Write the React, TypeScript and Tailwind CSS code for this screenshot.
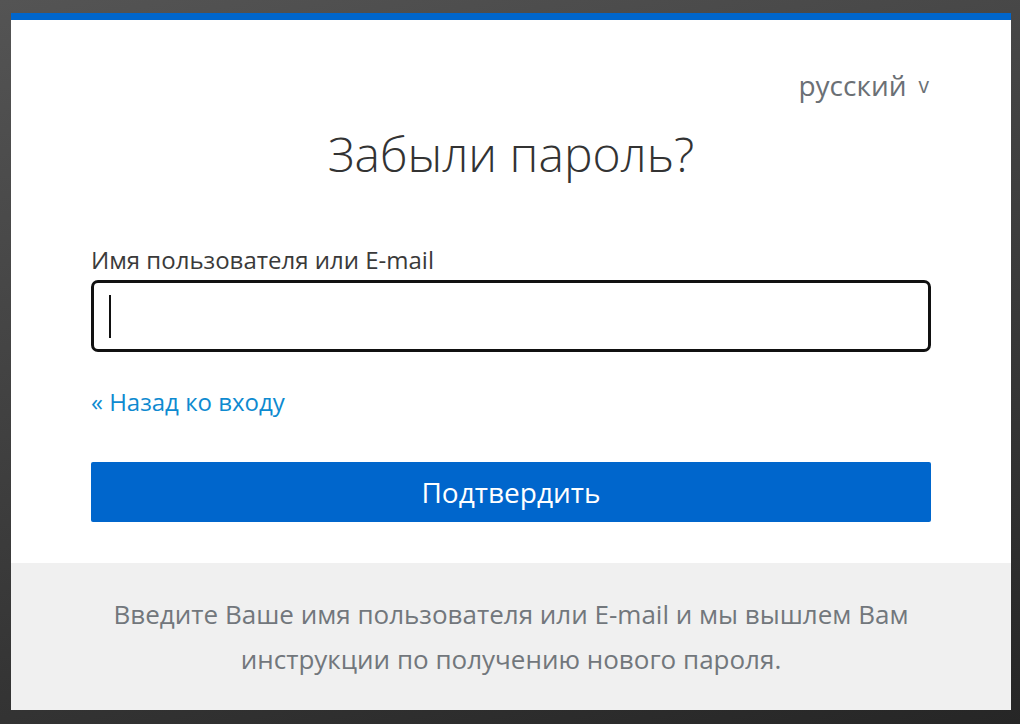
import React from "react";

export default function App() {
  return (
    <div
      className="h-[724px] w-full overflow-hidden bg-[linear-gradient(165deg,#545454_0%,#444444_35%,#343434_70%,#262626_100%)] pt-[13px] pl-[11px]"
      style={{ fontFamily: '"Open Sans", "Noto Sans", sans-serif' }}
    >
      <div className="w-[1000px] border-t-[7px] border-[#0066cc] bg-white">
        {/* form part */}
        <div className="px-[80px] pt-[46px] pb-[41px]">
          <div className="flex h-[38px] items-baseline justify-end gap-[12px] overflow-hidden pr-[2px] text-[28px] leading-[38px] text-[#6b7075]">
            <span>русский</span>
            <span className="relative -top-[3px] text-[21px]">v</span>
          </div>

          <h1 className="mt-[21px] text-center text-[48px] leading-[58px] font-light text-[#333]">
            Забыли пароль?
          </h1>

          <label className="mt-[62px] block text-[24px] leading-[30px] text-[#3a3a3a]">
            Имя пользователя или E-mail
          </label>
          <div className="mt-[5px] flex h-[72px] items-center rounded-[7px] border-[3px] border-[#111] pl-[15px]">
            <div className="h-[43px] w-[2px] bg-[#111]" />
          </div>

          <a className="mt-[35px] block text-[24px] leading-[30px] text-[#0e8ad0]" href="#">
            « Назад ко входу
          </a>

          <button className="mt-[45px] flex h-[60px] w-full items-center justify-center rounded-[2px] bg-[#0066cc] text-[28px] text-white">
            Подтвердить
          </button>
        </div>

        {/* footer note */}
        <div className="h-[147px] bg-[#f0f0f0] pt-[29px] text-center text-[26px] leading-[45px] text-[#72777c]">
          Введите Ваше имя пользователя или E-mail и мы вышлем Вам
          <br />
          инструкции по получению нового пароля.
        </div>
      </div>
    </div>
  );
}
